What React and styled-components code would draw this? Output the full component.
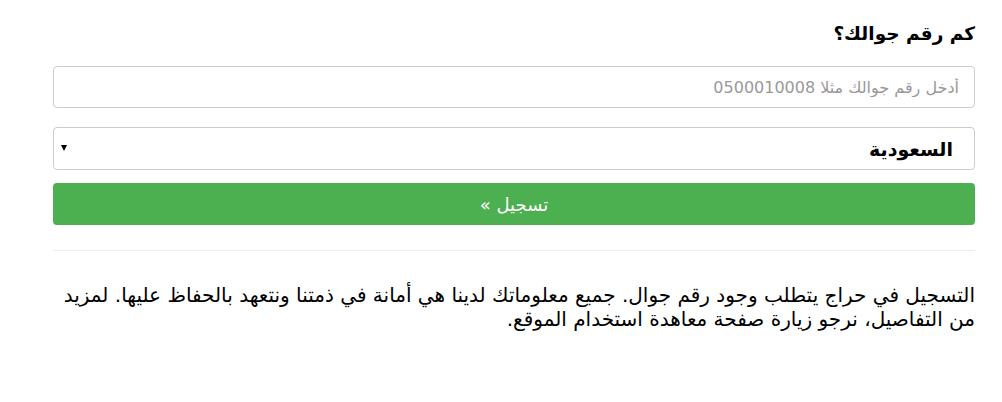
import React from "react";
import styled, { createGlobalStyle } from "styled-components";

const Global = createGlobalStyle`
  html, body {
    margin: 0;
    background: #fff;
    font-family: "DejaVu Sans", "Noto Sans", sans-serif;
    color: #000;
  }
`;

const Page = styled.div`
  direction: rtl;
  padding: 20px 27px 0 53px;
`;

const Title = styled.h3`
  margin: 0 0 18px;
  height: 28px;
  line-height: 28px;
  font-size: 18.5px;
  font-weight: bold;
`;

const Field = styled.input`
  display: block;
  box-sizing: border-box;
  width: 100%;
  height: 42px;
  margin: 0 0 19px;
  padding: 0 15px;
  border: 1px solid #ccc;
  border-radius: 4px;
  font-family: inherit;
  font-size: 16px;
  direction: rtl;
  &::placeholder {
    color: #999;
  }
`;

const SelectBox = styled.div`
  position: relative;
  box-sizing: border-box;
  height: 43px;
  margin: 0 0 13px;
  padding: 0 21px;
  border: 1px solid #ccc;
  border-radius: 4px;
  display: flex;
  align-items: center;
  font-size: 19px;
  font-weight: bold;
`;

const Arrow = styled.span`
  position: absolute;
  left: 7px;
  top: 17px;
  width: 0;
  height: 0;
  border-left: 3px solid transparent;
  border-right: 3px solid transparent;
  border-top: 6px solid #000;
`;

const Submit = styled.button`
  display: block;
  width: 100%;
  height: 42px;
  border: 0;
  border-radius: 4px;
  background: #4caf50;
  color: #fff;
  font-family: inherit;
  font-size: 18px;
  direction: rtl;
`;

const Rule = styled.hr`
  margin: 25px 0 0;
  border: 0;
  border-top: 1px solid #eee;
`;

const Note = styled.p`
  margin: 32px 0 0;
  font-size: 20px;
  line-height: 24px;
`;

export default function App() {
  return (
    <>
      <Global />
      <Page>
        <Title>كم رقم جوالك؟</Title>
        <Field placeholder="أدخل رقم جوالك مثلا 0500010008" />
        <SelectBox>
          السعودية
          <Arrow />
        </SelectBox>
        <Submit>تسجيل »</Submit>
        <Rule />
        <Note>
          التسجيل في حراج يتطلب وجود رقم جوال. جميع معلوماتك لدينا هي أمانة في
          ذمتنا ونتعهد بالحفاظ عليها. لمزيد من التفاصيل، نرجو زيارة صفحة معاهدة
          استخدام الموقع.
        </Note>
      </Page>
    </>
  );
}
